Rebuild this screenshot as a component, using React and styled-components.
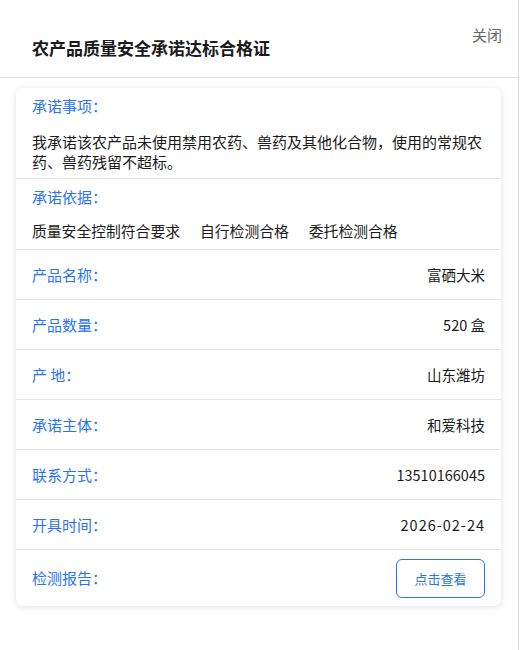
import React from 'react';
import styled, { createGlobalStyle } from 'styled-components';

const GlobalStyle = createGlobalStyle`
  html, body {
    margin: 0;
    padding: 0;
    background: #ffffff;
  }
  body {
    font-family: "Noto Sans CJK SC", "Noto Sans", sans-serif;
    color: #1a1a1a;
  }
`;

const Page = styled.div`
  width: 518px;
  height: 650px;
  border-right: 1px solid #dcdcdc;
`;

const Header = styled.div`
  display: flex;
  justify-content: space-between;
  align-items: flex-start;
  height: 78px;
  box-sizing: border-box;
  padding: 0 16px 0 32px;
  border-bottom: 1px solid #e2e2e2;
`;

const Title = styled.h1`
  margin: 36px 0 0;
  font-size: 17px;
  font-weight: 700;
  line-height: 24px;
  color: #1a1a1a;
`;

const Close = styled.div`
  margin-top: 25px;
  font-size: 15px;
  line-height: 20px;
  color: #666666;
  cursor: pointer;
`;

const Card = styled.div`
  margin: 10px 17px 0 16px;
  background: #ffffff;
  border-radius: 7px;
  box-shadow: 0 1px 6px rgba(0, 0, 0, 0.12);
  overflow: hidden;
`;

const Section = styled.div`
  padding: 8px 16px ${props => props.bottom || 8}px;
  border-bottom: 1px solid #e5e5e5;
`;

const Label = styled.div`
  font-size: 15px;
  line-height: 20px;
  color: #2a72f7;
`;

const Paragraph = styled.p`
  margin: 16px 0 0;
  font-size: 15px;
  line-height: 19.5px;
  color: #1a1a1a;
`;

const Tags = styled.div`
  display: flex;
  gap: 20px;
  margin-top: 14px;
  font-size: 14.8px;
  line-height: 20px;
  color: #1a1a1a;
`;

const Row = styled.div`
  display: flex;
  justify-content: space-between;
  align-items: center;
  height: ${props => props.height || 50}px;
  box-sizing: border-box;
  padding: 0 16px;
  border-bottom: ${props => (props.last ? 'none' : '1px solid #e5e5e5')};
`;

const Value = styled.div`
  font-size: 14.5px;
  line-height: 20px;
  color: #1a1a1a;
  letter-spacing: ${props => (props.numeric ? '1px' : '0')};
`;

const ViewButton = styled.button`
  width: 89px;
  height: 39px;
  border: 1px solid #2a72f7;
  border-radius: 6px;
  background: #ffffff;
  color: #2a72f7;
  font-family: inherit;
  font-size: 13px;
  cursor: pointer;
`;

const rows = [
  { label: '产品名称：', value: '富硒大米' },
  { label: '产品数量：', value: '520 盒' },
  { label: '产 地：', value: '山东潍坊' },
  { label: '承诺主体：', value: '和爱科技' },
  { label: '联系方式：', value: '13510166045' },
  { label: '开具时间：', value: '2026-02-24', numeric: true },
];

export default function App() {
  return (
    <>
      <GlobalStyle />
      <Page>
        <Header>
          <Title>农产品质量安全承诺达标合格证</Title>
          <Close>关闭</Close>
        </Header>
        <Card>
          <Section bottom={7}>
            <Label>承诺事项：</Label>
            <Paragraph>
              我承诺该农产品未使用禁用农药、兽药及其他化合物，使用的常规农药、兽药残留不超标。
            </Paragraph>
          </Section>
          <Section>
            <Label>承诺依据：</Label>
            <Tags>
              <span>质量安全控制符合要求</span>
              <span>自行检测合格</span>
              <span>委托检测合格</span>
            </Tags>
          </Section>
          {rows.map(row => (
            <Row key={row.label}>
              <Label>{row.label}</Label>
              <Value numeric={row.numeric}>{row.value}</Value>
            </Row>
          ))}
          <Row height={56} last>
            <Label>检测报告：</Label>
            <ViewButton>点击查看</ViewButton>
          </Row>
        </Card>
      </Page>
    </>
  );
}
